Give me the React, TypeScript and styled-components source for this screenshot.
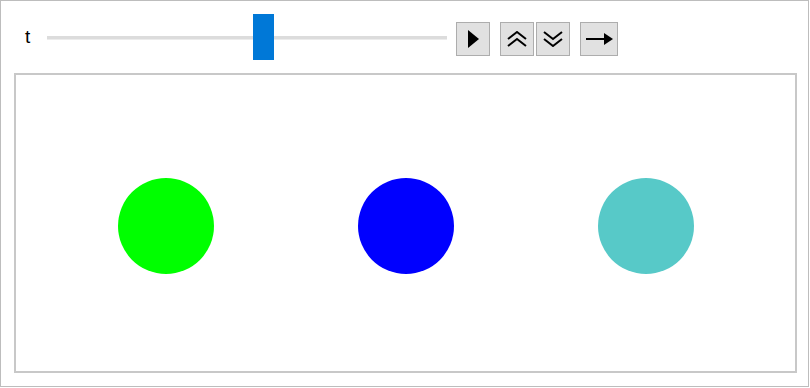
import React from 'react';
import styled, { createGlobalStyle } from 'styled-components';

const GlobalStyle = createGlobalStyle`
  body {
    margin: 0;
    background: #ffffff;
    font-family: "Liberation Sans", Arial, sans-serif;
  }
`;

const Frame = styled.div`
  box-sizing: border-box;
  width: 809px;
  height: 387px;
  border: 1px solid #bdbdbd;
  padding: 14px 11px 0 13px;
`;

const Controls = styled.div`
  display: flex;
  align-items: center;
  height: 46px;
`;

const Label = styled.span`
  font-size: 19px;
  color: #000;
  width: 33px;
  padding-left: 11px;
  box-sizing: border-box;
  line-height: 1;
  margin-top: -3px;
`;

const Track = styled.div`
  position: relative;
  width: 400px;
  height: 3px;
  background: #dcdcdc;
  border-bottom: 1px solid #ececec;
  margin-right: 9px;
`;

const Thumb = styled.div`
  position: absolute;
  top: -22px;
  width: 21px;
  height: 46px;
  background: #0078d7;
`;

const ButtonGroup = styled.div`
  display: flex;
  gap: 2px;
  margin-right: 10px;
`;

const Button = styled.button<{ $w?: number }>`
  box-sizing: border-box;
  width: ${({ $w }) => $w ?? 34}px;
  height: 34px;
  padding: 0;
  margin-top: 1px;
  background: #e1e1e1;
  border: 1px solid #adadad;
  display: flex;
  align-items: center;
  justify-content: center;
`;

const Panel = styled.div`
  box-sizing: border-box;
  width: 783px;
  height: 300px;
  margin-top: 12px;
  border: 2px solid #c8c8c8;
  display: flex;
  justify-content: center;
  align-items: center;
  padding-top: 5px;
`;

const Cell = styled.div`
  width: 240px;
  display: flex;
  justify-content: center;
`;

const Dot = styled.div<{ $color: string }>`
  width: 96px;
  height: 96px;
  border-radius: 50%;
  background: ${({ $color }) => $color};
`;

const PlayIcon = () => (
  <svg width="11" height="18" viewBox="0 0 11 18">
    <path d="M0 0 L11 9 L0 18 Z" fill="#000" />
  </svg>
);

const UpIcon = () => (
  <svg width="20" height="16" viewBox="0 0 20 16">
    <path d="M1 8 L10 1 L19 8 M1 15 L10 8 L19 15" fill="none" stroke="#000" strokeWidth="2" />
  </svg>
);

const DownIcon = () => (
  <svg width="20" height="16" viewBox="0 0 20 16">
    <path d="M1 1 L10 8 L19 1 M1 8 L10 15 L19 8" fill="none" stroke="#000" strokeWidth="2" />
  </svg>
);

const ArrowIcon = () => (
  <svg width="27" height="12" viewBox="0 0 27 12">
    <path d="M0 6 H19" stroke="#000" strokeWidth="2" />
    <path d="M18 0 L27 6 L18 12 Z" fill="#000" />
  </svg>
);

const colors = ['#00ff00', '#0000ff', '#57c9c8'];

export default function App() {
  return (
    <>
      <GlobalStyle />
      <Frame>
        <Controls>
          <Label>t</Label>
          <Track>
            <Thumb style={{ left: 206 }} />
          </Track>
          <ButtonGroup>
            <Button><PlayIcon /></Button>
          </ButtonGroup>
          <ButtonGroup>
            <Button><UpIcon /></Button>
            <Button><DownIcon /></Button>
          </ButtonGroup>
          <ButtonGroup>
            <Button $w={38}><ArrowIcon /></Button>
          </ButtonGroup>
        </Controls>
        <Panel>
          {colors.map((c) => (
            <Cell key={c}>
              <Dot $color={c} />
            </Cell>
          ))}
        </Panel>
      </Frame>
    </>
  );
}
